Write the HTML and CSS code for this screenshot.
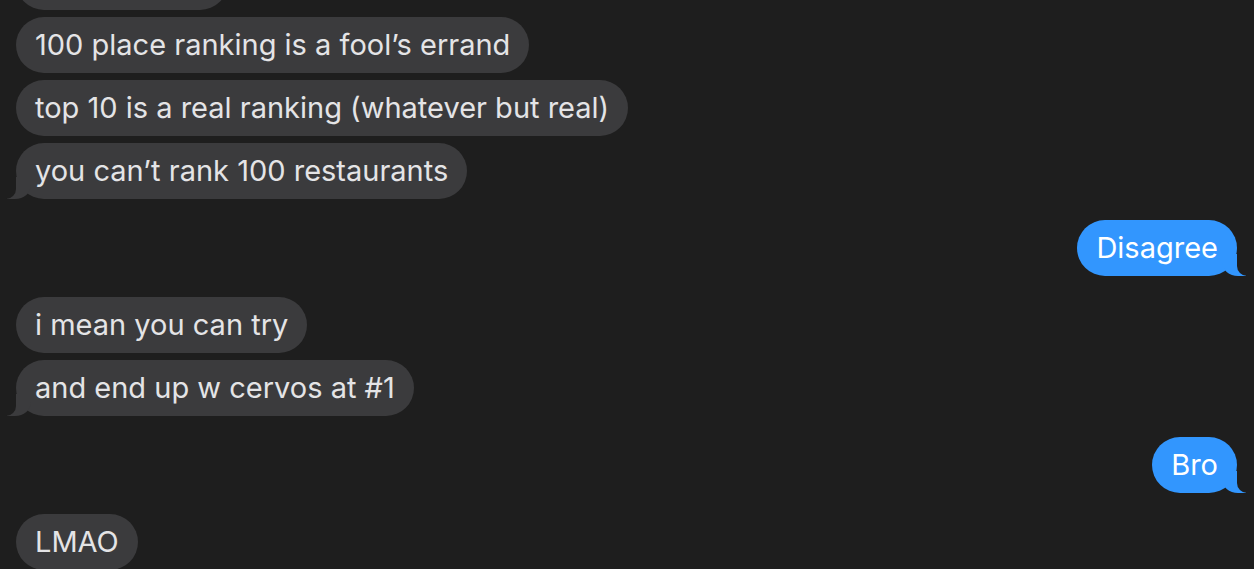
FILE: index.html
```html
<!DOCTYPE html>
<html lang="en">
<head>
    <meta charset="UTF-8">
    <meta name="viewport" content="width=device-width, initial-scale=1.0">
    <title>Messages</title>
    <link rel="stylesheet" href="styles.css">
</head>
<body>

    <div class="thread">
        <div class="group them">
            <div class="bubble">it’s too much</div>
            <div class="bubble">100 place ranking is a fool’s errand</div>
            <div class="bubble">top 10 is a real ranking (whatever but real)</div>
            <div class="bubble tail">you can’t rank 100 restaurants</div>
        </div>

        <div class="group me">
            <div class="bubble tail">Disagree</div>
        </div>

        <div class="group them">
            <div class="bubble">i mean you can try</div>
            <div class="bubble tail">and end up w cervos at #1</div>
        </div>

        <div class="group me">
            <div class="bubble tail">Bro</div>
        </div>

        <div class="group them">
            <div class="bubble">LMAO</div>
        </div>
    </div>

</body>
</html>
```

FILE: styles.css
```css
body {
    font-family: Inter, "Noto Sans", sans-serif;
    background-color: #1e1e1e;
    margin: 0;
    padding: 0;
    height: 100vh;
    overflow: hidden;
}
.thread {
    height: calc(100vh + 1px);
    display: flex;
    flex-direction: column;
    justify-content: flex-end;
    gap: 21px;
    padding: 0 17px 0 16px;
}
.group {
    display: flex;
    flex-direction: column;
    gap: 7px;
}
.group.them {
    align-items: flex-start;
}
.group.me {
    align-items: flex-end;
}
.bubble {
    position: relative;
    height: 56px;
    line-height: 56px;
    padding: 0 19px;
    border-radius: 28px;
    font-size: 29px;
    white-space: nowrap;
    box-sizing: border-box;
}
.them .bubble {
    background-color: #3b3b3d;
    color: #e4e4e6;
}
.me .bubble {
    background-color: #3296fe;
    color: #ffffff;
}

/* tails */
.bubble.tail::before,
.bubble.tail::after {
    content: "";
    position: absolute;
    bottom: 0;
    height: 22px;
}
.them .bubble.tail::before {
    left: -9px;
    width: 24px;
    background-color: #3b3b3d;
    border-bottom-right-radius: 16px 14px;
}
.them .bubble.tail::after {
    left: -26px;
    width: 26px;
    background-color: #1e1e1e;
    border-bottom-right-radius: 10px;
}
.me .bubble.tail::before {
    right: -9px;
    width: 24px;
    background-color: #3296fe;
    border-bottom-left-radius: 16px 14px;
}
.me .bubble.tail::after {
    right: -26px;
    width: 26px;
    background-color: #1e1e1e;
    border-bottom-left-radius: 10px;
}
```
